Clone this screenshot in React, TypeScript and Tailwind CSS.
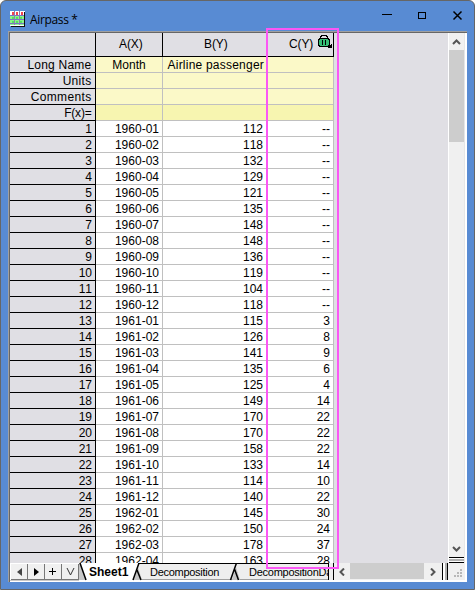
import React from 'react';

const passengers: number[] = [112, 118, 132, 129, 121, 135, 148, 148, 136, 119, 104, 118, 115, 126, 141, 135, 125, 149, 170, 170, 158, 133, 114, 140, 145, 150, 178, 163];
const differences: number[] = [3, 8, 9, 6, 4, 14, 22, 22, 22, 14, 10, 22, 30, 24, 37, 28];

const labels = [
  { name: 'Long Name', a: 'Month', b: 'Airline passenger', bg: 'bg-[#fbf9c8]', track: 'tracking-[0.23px]' },
  { name: 'Units', a: '', b: '', bg: 'bg-[#fbf9c8]', track: 'tracking-[0.3px]' },
  { name: 'Comments', a: '', b: '', bg: 'bg-[#fbf9c8]', track: 'tracking-[0.35px]' },
  { name: 'F(x)=', a: '', b: '', bg: 'bg-[#f7f5b0]', track: 'tracking-[-0.2px]' },
];

function SheetIcon() {
  return (
    <svg width="16" height="16" viewBox="0 0 16 16" shapeRendering="crispEdges">
      <path d="M0 0h15v15H0z" fill="#fff" />
      <path d="M2 1h2v3H2zM6 1h2v3H6zM11 1h2v3h-2z" fill="#f4444c" />
      <path d="M0 5h15v9H0z" fill="#8af58a" />
      <path d="M2 6h2v2H2zM6 6h2v2H6zM10 6h2v2h-2zM2 10h2v2H2zM6 10h2v2H6zM10 10h2v2h-2z" fill="#55e060" />
      <path d="M0 4h15v1H0zM0 8h15v1H0zM0 12h15v1H0z" fill="#7a70c8" />
      <path d="M4 0h1v14H4zM9 0h1v14H9z" fill="#8b7fb0" />
      <path d="M15 1v15H1v-1h13V1z" fill="#111" />
    </svg>
  );
}

function LockIcon() {
  return (
    <svg width="15" height="14" viewBox="0 0 15 14" shapeRendering="crispEdges">
      <path d="M3 0h6v1h1v3H9V2H8V1H4v1H3v2H2V1h1z" fill="#000" />
      <path d="M1 3h10v1h1v7h-1v1H1v-1H0V4h1z" fill="#000" />
      <path d="M2 4h8v1h1v5h-1v1H2v-1H1V5h1z" fill="#35bd75" />
      <path d="M4 5h1v5H4zM7 5h1v5H7z" fill="#000" />
      <path d="M14 9v4h-4v-1h1v-1h1v-1h1V9z" fill="#000" />
    </svg>
  );
}

function Header() {
  return (
    <div className="flex h-6 text-[12px] leading-[22px] tracking-[-0.1px] text-black">
      <div className="w-[86px] border-r border-b border-black bg-[#e0dfe4]" />
      <div className="w-[67px] border-r border-b border-black bg-[#e0dfe4] pl-[23px]">A(X)</div>
      <div className="w-[104px] border-r border-b border-black bg-[#e0dfe4] pl-[41px]">B(Y)</div>
      <div className="flex w-[67px] border-r border-b border-black bg-[#e0dfe4] pl-[22px]">
        <span className="w-[29px]">C(Y)</span>
        <span className="pt-0.5"><LockIcon /></span>
      </div>
    </div>
  );
}

function NavButton({ children }: { children: React.ReactNode }) {
  return (
    <div className="flex h-4 w-[17px] items-center justify-center border-r border-b border-[#777] bg-[#f0f0f0]">
      {children}
    </div>
  );
}

function Navigation() {
  return (
    <div className="flex h-[18px] w-[324px] shrink-0 bg-[#c8c8c8]">
      <div className="flex h-[17px] w-[69px] border-t border-l border-white">
        <NavButton><svg width="5" height="8"><path d="M5 0v8L0 4z" fill="#444" /></svg></NavButton>
        <NavButton><svg width="5" height="8"><path d="M0 0v8l5-4z" fill="#000" /></svg></NavButton>
        <NavButton><svg width="8" height="7" shapeRendering="crispEdges"><path d="M0 3h7v1H0zM3 0h1v7H3z" fill="#000" /></svg></NavButton>
        <NavButton><svg width="9" height="8"><path d="M1 0l3.500 7L8 0" fill="none" stroke="#333" /></svg></NavButton>
      </div>
      <div className="relative h-[18px] w-[255px] overflow-hidden text-[11px] leading-4 text-black">
        <svg className="absolute inset-0" width="255" height="18" viewBox="0 0 255 18">
          <path d="M0 0h255v16H0z" fill="#eee" />
          <path d="M0 16.500h255" stroke="#a0a0a0" />
          <path d="M0 17.500h255" stroke="#fff" />
          <path d="M1 0h59l-6 17H7z" fill="#fff" />
          <path d="M59 4l4 13h-8z" fill="#c4c4c4" />
          <path d="M157 4l4 13h-8z" fill="#c4c4c4" />
          <path d="M0 0v17h7L1 0z" fill="#c8c8c8" />
          <path d="M1 0l6 17M60 0l-6 17M58 7l4 10" fill="none" stroke="#000" strokeWidth="1.500" />
          <path d="M157.500 0l-6 17M155.500 6l4 11" fill="none" stroke="#000" strokeWidth="1.500" />
          <path d="M59 .5h196" stroke="#000" />
        </svg>
        <span className="absolute top-px left-[10px] text-[12px] font-bold">Sheet1</span>
        <span className="absolute top-px left-[71px] tracking-[-0.28px]">Decomposition</span>
        <span className="absolute top-px left-[170px] w-[79px] overflow-hidden whitespace-nowrap tracking-[-0.25px]">DecompositionData</span>
        <div className="absolute top-0 left-[249px] h-[17px] w-1.5 border-x border-black bg-[#eee]" />
      </div>
    </div>
  );
}

function Worksheet() {
  return (
    <div className="flex h-[548px] w-[324px] flex-col">
      <div className="h-[530px] shrink-0 overflow-hidden">
        <Header />
        {labels.map((row) => (
          <div key={row.name} className="flex h-4 text-[12px] leading-4 text-black">
            <div className={`w-[86px] border-r border-b border-black bg-[#e0dfe4] pr-[3.500px] text-right ${row.track}`}>{row.name}</div>
            <div className={`w-[67px] border-r border-b border-[#c0c0c0] text-center ${row.bg}`}>{row.a}</div>
            <div className={`w-[104px] border-r border-b border-[#c0c0c0] pr-0.5 text-right tracking-[0.22px] whitespace-nowrap ${row.bg}`}>{row.b}</div>
            <div className={`w-[67px] border-r border-b border-[#c0c0c0] ${row.bg}`} />
          </div>
        ))}
        {passengers.map((value, index) => {
          const year = 1960 + Math.floor(index / 12);
          const month = String(index % 12 + 1).padStart(2, '0');
          return (
            <div key={index} className="flex h-4 text-right text-[12px] leading-4 text-black">
              <div className="w-[86px] border-r border-b border-black bg-[#e0dfe4] pr-[3px]">{index + 1}</div>
              <div className="w-[67px] border-r border-b border-[#c0c0c0] bg-white pr-[3px]">{year}-{month}</div>
              <div className="w-[104px] border-r border-b border-[#c0c0c0] bg-white pr-[3px]">{value}</div>
              <div className="w-[67px] border-r border-b border-[#c0c0c0] bg-white pr-[3px]">{index < 12 ? '--' : differences[index - 12]}</div>
            </div>
          );
        })}
      </div>
      <Navigation />
    </div>
  );
}

function ScrollColumn() {
  return (
    <div className="flex h-[548px] w-[133px] flex-col">
      <div className="flex h-[530px]">
        <div className="w-[114px] bg-[#e0dfe4]" />
        <div className="flex w-4 flex-col border-l border-white bg-[#f0f0f0]">
          <div className="flex h-[17px] items-center justify-center"><svg width="9" height="6"><path d="M1 5l3.500-3.500L8 5" fill="none" stroke="#555" strokeWidth="2" /></svg></div>
          <div className="h-[92px] bg-[#cdcdcd]" />
          <div className="grow" />
          <div className="flex h-[16px] items-center justify-center"><svg width="9" height="6"><path d="M1 1l3.500 3.500L8 1" fill="none" stroke="#555" strokeWidth="2" /></svg></div>
          <div className="h-px bg-black" />
          <div className="h-1 border-y border-white bg-[#b0b0b0]" />
          <div className="h-px bg-black" />
        </div>
        <div className="w-[3px] border-r-2 border-white bg-[#e6e6e6]" />
      </div>
      <div className="flex h-[18px] border-b border-white bg-[#f0f0f0]">
        <div className="flex w-4 items-center justify-center"><svg width="6" height="8"><path d="M5 .5L1.500 4 5 7.500" fill="none" stroke="#555" strokeWidth="2" /></svg></div>
        <div className="h-4 w-[74px] bg-[#cdcdcd]" />
        <div className="flex w-[18px] items-center justify-center"><svg width="6" height="8"><path d="M1 .5L4.500 4 1 7.500" fill="none" stroke="#555" strokeWidth="2" /></svg></div>
        <div className="h-[17px] w-[6px] border-x border-black bg-white pl-0.5"><div className="h-full w-0.5 bg-[#b0b0b0]" /></div>
        <svg width="19" height="17" shapeRendering="crispEdges">
          <path d="M17 0h2v17h-2z" fill="#fff" />
          <path d="M12 6h2v2h-2zM9 9h2v2H9zM12 9h2v2h-2zM6 12h2v2H6zM9 12h2v2H9zM12 12h2v2h-2z" fill="#b8b8b8" />
        </svg>
      </div>
    </div>
  );
}

export default function App() {
  return (
    <main className="relative h-[590px] w-[475px] overflow-hidden bg-white font-['Liberation_Sans',Arial,sans-serif] [font-kerning:none]">
      <div className="h-[590px] w-[475px] rounded-t-[6px] border border-[#666] bg-[#588bd3]">
        <div className="flex h-[30px] items-start">
          <div className="flex w-[375px] pt-[10px] pl-[9px]">
            <SheetIcon />
            <span className="ml-1 font-['Open_Sans','Noto_Sans',sans-serif] text-[12px] leading-[18px] tracking-[-0.350px] text-black">Airpass *</span>
          </div>
          <svg width="98" height="29" viewBox="0 0 98 29" shapeRendering="crispEdges">
            <path d="M6 13h10v1H6zM42 11h8v7h-8zm1 1v5h6v-5z" fill="#000" fillRule="evenodd" />
            <path d="M77.500 10.500l8 8M85.500 10.500l-8 8" fill="none" stroke="#000" strokeWidth="1.500" shapeRendering="auto" />
          </svg>
        </div>
        <div className="ml-[7px] flex h-[551px] w-[459px] border-t border-l border-[#a0a0a0] bg-white">
          <div className="flex h-[550px] w-[458px] border-t border-l border-[#666]">
            <Worksheet />
            <ScrollColumn />
          </div>
        </div>
      </div>
      <div className="absolute top-7 left-[266px] h-[541px] w-[73px] border-2 border-[#fb57f5]" />
    </main>
  );
}
